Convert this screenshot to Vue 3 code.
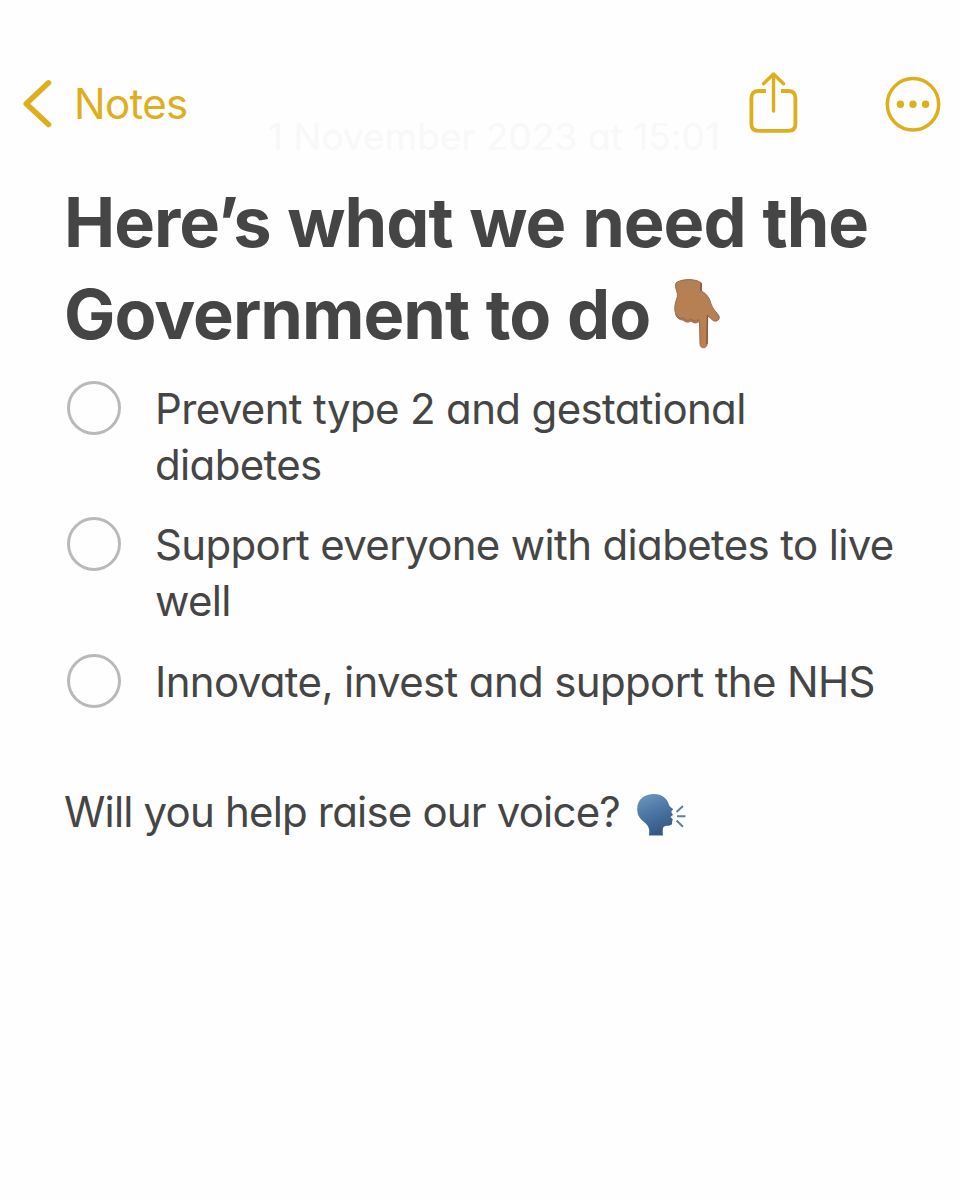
<template>
  <div class="note-page">
    <header class="nav-bar">
      <a class="back">
        <svg class="back-icon" viewBox="0 0 32 50">
          <path d="M28.5 3.8 L6.2 24.8 L28.5 45.5" />
        </svg>
        <span class="back-text">Notes</span>
      </a>
      <div class="actions">
        <svg class="share-icon" viewBox="0 0 50 64">
          <path d="M17 19 H9.5 Q2.4 19 2.4 26 V52 Q2.4 58.8 9.5 58.8 H39.5 Q46.4 58.8 46.4 52 V26 Q46.4 19 39.5 19 H32" />
          <path class="arrow" d="M24.5 39 V2 M14.5 11.8 L24.5 2 L34.5 11.8" />
        </svg>
        <svg class="more-icon" viewBox="0 0 56 56">
          <circle class="ring" cx="28" cy="28.3" r="25.7" />
          <circle cx="15.4" cy="28.3" r="3.7" />
          <circle cx="28" cy="28.3" r="3.7" />
          <circle cx="40.6" cy="28.3" r="3.7" />
        </svg>
      </div>
      <span class="date">1 November 2023 at 15:01</span>
    </header>

    <main class="note">
      <h1 class="title">
        <span class="title-line">Here’s what we need the</span>
        <span class="title-line second">
          <span>Government to do</span>
          <svg class="hand-icon" viewBox="0 0 50 74">
            <defs>
              <linearGradient id="skin" x1="0" y1="0" x2="0" y2="1">
                <stop offset="0" stop-color="#b57f55" />
                <stop offset="1" stop-color="#b9814f" />
              </linearGradient>
            </defs>
            <path
              fill="url(#skin)"
              stroke="#9a6a50"
              stroke-width="1"
              d="M3 5 C7 1 23 0 28 5 C29.5 8 27.5 10 28.5 13 C34 16 37 21 38 26 C40 32 44 34 46 38 C47.5 42.5 42 45 39 41.5 L34.5 37.5 L34 66 C34 71 27 71 27 66 L26.5 43 C24 46 20 45 18 43 C15 45 12 44 10 42 C6 42 3 39 2.5 35 C1 31 2 25 4 20 C6 15 1 10 3 5 Z"
            />
            <path class="crease" d="M28 5 C29 8 27 10 28 13 M34.5 37 L34 66" />
            <path class="crease light" d="M3 36 C5 40 8 41 10 40 C12 43 16 43 18 41 C21 44 24 43 26 41" />
          </svg>
        </span>
      </h1>

      <ul class="checklist">
        <li v-for="item in items" :key="item" class="item">
          <span class="check"></span>
          <span class="item-text">{{ item }}</span>
        </li>
      </ul>

      <p class="closing">
        <span>Will you help raise our voice?</span>
        <svg class="voice-icon" viewBox="0 0 52 44">
          <defs>
            <linearGradient id="head" x1="0" y1="0" x2="0.35" y2="1">
              <stop offset="0" stop-color="#7299c0" />
              <stop offset="0.5" stop-color="#4d78a5" />
              <stop offset="1" stop-color="#365a85" />
            </linearGradient>
          </defs>
          <path
            fill="url(#head)"
            d="M13 42.5 C14 36 12.5 32.5 8 29 C3 25 1.2 21 1.2 16 C1.2 6 9 1 18 1 C26 1 31 5 33 12 C33.4 14 36.5 15 37 16 C37.3 17.3 35.2 17.6 35.3 19 L37 22 L34.5 24 L36.8 26.3 C36.3 28 35.8 29 36.2 30.5 C35.5 33.5 29 32 27.5 34 C26.4 36 26.7 40 27 42.5 Z"
          />
          <path class="waves" d="M40.5 19 L47 13 M41 23.3 H49.5 M40.5 27.5 L47 33.8" />
        </svg>
      </p>
    </main>
  </div>
</template>

<script setup>
const items = [
  'Prevent type 2 and gestational diabetes',
  'Support everyone with diabetes to live well',
  'Innovate, invest and support the NHS'
]
</script>

<style>
body {
  margin: 0;
  background: #fefefe;
}
</style>

<style scoped>
.note-page {
  min-height: 1200px;
  background: #fefefe;
  color: #454545;
  font-family: Inter, 'Liberation Sans', sans-serif;
  font-size: 42px;
  line-height: 56px;
  letter-spacing: -0.65px;
  font-feature-settings: 'cv11' 1;
}

.nav-bar {
  position: relative;
  display: flex;
  justify-content: space-between;
  box-sizing: border-box;
  height: 177px;
  padding: 72px 19px 0 20px;
  color: #dfae1c;
}

.back {
  display: flex;
  align-items: center;
  height: 64px;
  gap: 22px;
}

.back-icon {
  width: 32px;
  height: 50px;
  fill: none;
  stroke: currentColor;
  stroke-width: 5.5;
  stroke-linecap: round;
  stroke-linejoin: round;
}

.actions {
  display: flex;
  align-items: center;
  height: 64px;
  gap: 86px;
}

.share-icon {
  width: 50px;
  height: 64px;
  fill: none;
  stroke: currentColor;
  stroke-width: 3.8;
  stroke-linecap: butt;
  stroke-linejoin: round;
}

.arrow {
  stroke-width: 3.4;
  stroke-linecap: round;
}

.more-icon {
  width: 56px;
  height: 56px;
  fill: currentColor;
}

.ring {
  fill: none;
  stroke: currentColor;
  stroke-width: 3.5;
}

/* timestamp fading out under the nav bar */
.date {
  position: absolute;
  top: 109px;
  left: 268px;
  color: #f8f8f8;
  font-size: 37px;
  letter-spacing: 0.05px;
  white-space: nowrap;
}

.note {
  padding: 0 50px 0 64px;
}

.title {
  margin: 0;
  font-size: 68.5px;
  font-weight: 700;
  line-height: 92px;
  letter-spacing: -0.98px;
  word-spacing: 1.5px;
}

.title-line {
  display: block;
  white-space: nowrap;
}

.title-line.second {
  display: flex;
  align-items: center;
  gap: 23px;
}

.hand-icon {
  width: 50px;
  height: 74px;
}

.crease {
  fill: none;
  stroke: #8a5844;
  stroke-width: 1.5;
}

.crease.light {
  stroke: #a56e4b;
}

.checklist {
  display: flex;
  flex-direction: column;
  gap: 24.4px;
  margin: 20px 0 0;
  padding: 0;
  list-style: none;
}

.item {
  display: flex;
  gap: 34px;
}

.check {
  flex: none;
  box-sizing: border-box;
  width: 54px;
  height: 54px;
  margin-left: 3px;
  border: 3px solid #b9b9b9;
  border-radius: 50%;
}

.closing {
  display: flex;
  align-items: center;
  gap: 16px;
  margin: 74px 0 0;
  letter-spacing: -0.82px;
  white-space: nowrap;
}

.voice-icon {
  width: 52px;
  height: 44px;
  margin-top: 7px;
}

.waves {
  fill: none;
  stroke: #607f9f;
  stroke-width: 2;
}
</style>
